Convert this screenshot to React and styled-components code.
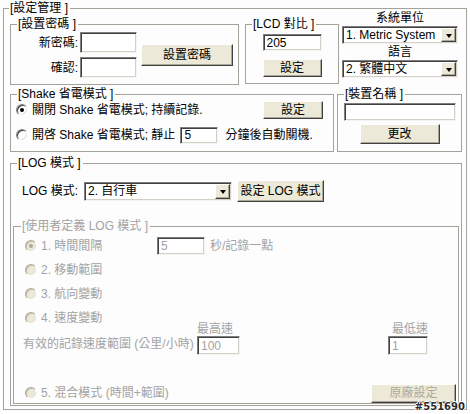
import React from 'react';
import styled, { createGlobalStyle, css } from 'styled-components';

const GlobalStyle = createGlobalStyle`
  html, body {
    margin: 0;
    padding: 0;
    background: #fdfdfd;
  }
  body {
    font-family: "Liberation Sans", "Noto Sans CJK TC", sans-serif;
    font-size: 12px;
    line-height: 14px;
    color: #000;
  }
`;

const Page = styled.div`
  position: relative;
  width: 470px;
  height: 414px;
  overflow: hidden;
  padding-top: 1px;
  box-sizing: border-box;
  background: #fdfdfd;
`;

const Group = styled.fieldset`
  margin: 0;
  margin-left: ${p => p.$ml || 0}px;
  width: ${p => p.$w}px;
  min-width: 0;
  box-sizing: border-box;
  padding: 0;
  border: 1px solid #a3a39a;
`;

const Legend = styled.legend`
  margin-left: ${p => (p.$ml === undefined ? 6 : p.$ml)}px;
  padding: 0 2px 0 1px;
  height: 14px;
  line-height: 14px;
  white-space: nowrap;
  color: ${p => (p.$disabled ? '#a3a3a3' : '#000')};
`;

const OuterBody = styled.div`
  padding: 2px 4px 3px 6px;
`;

const TopRow = styled.div`
  display: flex;
  align-items: flex-start;
`;

const MiddleRow = styled.div`
  display: flex;
  align-items: flex-start;
  margin-top: 2px;
`;

const PasswordGrid = styled.div`
  display: grid;
  grid-template-columns: 69px 57px auto;
  grid-template-rows: 21px 21px;
  row-gap: 4px;
  padding: 1px 0 6px;
`;

const FieldLabel = styled.span`
  align-self: center;
  text-align: right;
  padding-right: 2px;
  white-space: nowrap;
`;

const TextBox = styled.input`
  box-sizing: border-box;
  width: ${p => p.$w}px;
  height: ${p => p.$h || 18}px;
  margin: 0;
  padding: 0 3px;
  font: inherit;
  color: ${p => (p.disabled ? '#a3a3a3' : '#000')};
  background: #fff;
  border: 1px solid;
  border-color: #7f7f7f #f4f4f0 #f4f4f0 #7f7f7f;
  box-shadow: inset 1px 1px 0 #404040, inset -1px -1px 0 #d4d0c8;
  outline: none;
`;

const Button = styled.button`
  box-sizing: border-box;
  width: ${p => p.$w}px;
  height: ${p => p.$h}px;
  margin: 0;
  padding: 0;
  font: inherit;
  line-height: 1;
  white-space: nowrap;
  color: ${p => (p.disabled ? '#aca899' : '#000')};
  background: #ece9d8;
  border: 1px solid;
  border-color: #fff #404040 #404040 #fff;
  box-shadow: inset -1px -1px 0 #aca899;
  ${p =>
    p.$span &&
    css`
      grid-column: 3;
      grid-row: 1 / span 2;
      align-self: center;
      margin-left: 4px;
    `}
`;

const StackBody = styled.div`
  display: flex;
  flex-direction: column;
  align-items: center;
  gap: ${p => p.$gap}px;
  padding: ${p => p.$pad};
`;

const SettingsColumn = styled.div`
  display: flex;
  flex-direction: column;
  width: 120px;
  margin-left: 3px;
  margin-top: -7px;
`;

const CenterCaption = styled.div`
  width: 116px;
  text-align: center;
  line-height: 16px;
  padding-left: ${p => p.$shift || 0}px;
  box-sizing: border-box;
`;

const Select = styled.div`
  display: flex;
  box-sizing: border-box;
  width: ${p => p.$w}px;
  height: ${p => p.$h || 18}px;
  background: #fff;
  border: 1px solid;
  border-color: #7f7f7f #f4f4f0 #f4f4f0 #7f7f7f;
  box-shadow: inset 1px 1px 0 #404040, inset -1px -1px 0 #d4d0c8;
  padding: 1px;
`;

const SelectText = styled.span`
  flex: 1;
  padding-left: 2px;
  white-space: nowrap;
  overflow: hidden;
  align-self: center;
`;

const DropButton = styled.span`
  flex: none;
  width: 15px;
  box-sizing: border-box;
  display: flex;
  align-items: center;
  justify-content: center;
  background: #ece9d8;
  border: 1px solid;
  border-color: #fff #404040 #404040 #fff;
  box-shadow: inset -1px -1px 0 #aca899;

  &::after {
    content: '';
    border-left: 3.5px solid transparent;
    border-right: 3.5px solid transparent;
    border-top: 4px solid #000;
    margin-top: 1px;
  }
`;

const ShakeBody = styled.div`
  display: flex;
  flex-direction: column;
  gap: 7px;
  padding: 0 10px 7px 5px;
`;

const OptionRow = styled.div`
  display: flex;
  align-items: center;
  height: ${p => p.$h || 18}px;
  justify-content: ${p => (p.$spread ? 'space-between' : 'flex-start')};
`;

const OptionLabel = styled.label`
  display: flex;
  align-items: center;
  gap: 4px;
  white-space: nowrap;
  width: ${p => (p.$w ? `${p.$w}px` : 'auto')};
  color: ${p => (p.$disabled ? '#a3a3a3' : '#000')};
`;

const Radio = styled.span`
  position: relative;
  flex: none;
  width: 12px;
  height: 12px;
  box-sizing: border-box;
  border-radius: 50%;
  background: ${p => (p.$disabled ? '#ece9d8' : '#fff')};
  border: 1px solid;
  border-color: ${p => (p.$disabled ? '#aca899 #fff #fff #aca899' : '#808080 #fff #fff #808080')};
  box-shadow: inset 1px 1px 0 ${p => (p.$disabled ? '#c8c4b4' : '#404040')},
    inset -1px -1px 0 #e4e0d4;

  ${p =>
    p.$checked &&
    css`
      &::after {
        content: '';
        position: absolute;
        left: 3px;
        top: 3px;
        width: 4px;
        height: 4px;
        border-radius: 50%;
        background: ${p.$disabled ? '#aca899' : '#000'};
      }
    `}
`;

const Inline = styled.span`
  white-space: nowrap;
  margin-left: ${p => p.$ml || 0}px;
  color: ${p => (p.$disabled ? '#a3a3a3' : '#000')};
`;

const LogBody = styled.div`
  padding: 10px 2px 1px;
`;

const LogControls = styled.div`
  display: flex;
  align-items: center;
  height: 22px;
  padding-left: 9px;
`;

const LogLabel = styled.span`
  width: 62px;
  white-space: nowrap;
`;

const CustomBody = styled.div`
  padding: 1px 2px 0 11px;
`;

const SpeedGrid = styled.div`
  display: grid;
  grid-template-columns: 174px 43px 148px 40px;
  grid-template-rows: 13px 19px;
  margin: -7px 0 0 -2px;
  color: #a3a3a3;
`;

const SpeedCaption = styled.span`
  grid-row: 1;
  grid-column: ${p => p.$col};
  justify-self: ${p => p.$align};
  margin-right: ${p => p.$mr || 0}px;
  line-height: 13px;
  white-space: nowrap;
`;

const SpeedLabel = styled.span`
  grid-row: 2;
  grid-column: 1;
  align-self: center;
  margin-top: -3px;
  white-space: nowrap;
`;

const SpeedInput = styled(TextBox)`
  grid-row: 2;
  grid-column: ${p => p.$col};
`;

const BottomRow = styled(OptionRow)`
  margin-top: 28px;
`;

const Watermark = styled.div`
  position: absolute;
  right: 5px;
  bottom: 1px;
  font-family: "DejaVu Sans", sans-serif;
  font-weight: bold;
  font-size: 10px;
  line-height: 12px;
  color: #2a2a2a;
  text-shadow: 1px 0 0 #fff, -1px 0 0 #fff, 0 1px 0 #fff, 0 -1px 0 #fff;
`;

export default function App() {
  return (
    <Page>
      <GlobalStyle />
      <Group $w={464} $ml={3}>
        <Legend $ml={5}>[設定管理 ]</Legend>
        <OuterBody>
          <TopRow>
            <Group $w={229}>
              <Legend>[設置密碼 ]</Legend>
              <PasswordGrid>
                <FieldLabel>新密碼:</FieldLabel>
                <TextBox $w={57} $h={21} />
                <Button $w={92} $h={22} $span>設置密碼</Button>
                <FieldLabel>確認:</FieldLabel>
                <TextBox $w={57} $h={21} />
              </PasswordGrid>
            </Group>

            <Group $w={94} $ml={6}>
              <Legend>[LCD 對比 ]</Legend>
              <StackBody $gap={8} $pad="3px 0 6px">
                <TextBox $w={59} $h={17} defaultValue="205" />
                <Button $w={59} $h={18}>設定</Button>
              </StackBody>
            </Group>

            <SettingsColumn>
              <CenterCaption>系統單位</CenterCaption>
              <Select $w={116} $h={18}>
                <SelectText>1. Metric System</SelectText>
                <DropButton />
              </Select>
              <CenterCaption $shift={-6}>語言</CenterCaption>
              <Select $w={116} $h={18}>
                <SelectText>2. 繁體中文</SelectText>
                <DropButton />
              </Select>
            </SettingsColumn>
          </TopRow>

          <MiddleRow>
            <Group $w={324}>
              <Legend>[Shake 省電模式 ]</Legend>
              <ShakeBody>
                <OptionRow $spread>
                  <OptionLabel>
                    <Radio $checked />
                    關閉 Shake 省電模式; 持續記錄.
                  </OptionLabel>
                  <Button $w={60} $h={18}>設定</Button>
                </OptionRow>
                <OptionRow>
                  <OptionLabel>
                    <Radio />
                    開啓 Shake 省電模式; 靜止
                  </OptionLabel>
                  <TextBox $w={38} $h={17} defaultValue="5" style={{ marginLeft: 5 }} />
                  <Inline $ml={7}>分鐘後自動關機.</Inline>
                </OptionRow>
              </ShakeBody>
            </Group>

            <Group $w={125} $ml={3}>
              <Legend>[裝置名稱 ]</Legend>
              <StackBody $gap={3} $pad="2px 0 7px">
                <TextBox $w={112} $h={18} />
                <Button $w={80} $h={20}>更改</Button>
              </StackBody>
            </Group>
          </MiddleRow>

          <Group $w={452} style={{ marginTop: 4 }}>
            <Legend>[LOG 模式 ]</Legend>
            <LogBody>
              <LogControls>
                <LogLabel>LOG 模式:</LogLabel>
                <Select $w={148} $h={19}>
                  <SelectText>2. 自行車</SelectText>
                  <DropButton />
                </Select>
                <Button $w={87} $h={22} style={{ marginLeft: 5 }}>設定 LOG 模式</Button>
              </LogControls>

              <Group $w={446} style={{ marginTop: 17 }}>
                <Legend $ml={7} $disabled>[使用者定義 LOG 模式 ]</Legend>
                <CustomBody>
                  <OptionRow $h={24}>
                    <OptionLabel $w={132} $disabled>
                      <Radio $disabled $checked />
                      1. 時間間隔
                    </OptionLabel>
                    <TextBox $w={48} $h={18} defaultValue="5" disabled />
                    <Inline $ml={5} $disabled>秒/記錄一點</Inline>
                  </OptionRow>
                  <OptionRow $h={24}>
                    <OptionLabel $disabled>
                      <Radio $disabled />
                      2. 移動範圍
                    </OptionLabel>
                  </OptionRow>
                  <OptionRow $h={24}>
                    <OptionLabel $disabled>
                      <Radio $disabled />
                      3. 航向變動
                    </OptionLabel>
                  </OptionRow>
                  <OptionRow $h={24}>
                    <OptionLabel $disabled>
                      <Radio $disabled />
                      4. 速度變動
                    </OptionLabel>
                  </OptionRow>

                  <SpeedGrid>
                    <SpeedCaption $col={2} $align="end" $mr={7}>最高速</SpeedCaption>
                    <SpeedCaption $col={4} $align="end">最低速</SpeedCaption>
                    <SpeedLabel>有效的記錄速度範圍 (公里/小時)</SpeedLabel>
                    <SpeedInput $col={2} $w={43} $h={19} defaultValue="100" disabled />
                    <SpeedInput $col={4} $w={40} $h={19} defaultValue="1" disabled />
                  </SpeedGrid>

                  <BottomRow $h={20} $spread>
                    <OptionLabel $disabled>
                      <Radio $disabled />
                      5. 混合模式 (時間+範圍)
                    </OptionLabel>
                    <Button $w={85} $h={19} disabled>原廠設定</Button>
                  </BottomRow>
                </CustomBody>
              </Group>
            </LogBody>
          </Group>
        </OuterBody>
      </Group>
      <Watermark>#551690</Watermark>
    </Page>
  );
}
